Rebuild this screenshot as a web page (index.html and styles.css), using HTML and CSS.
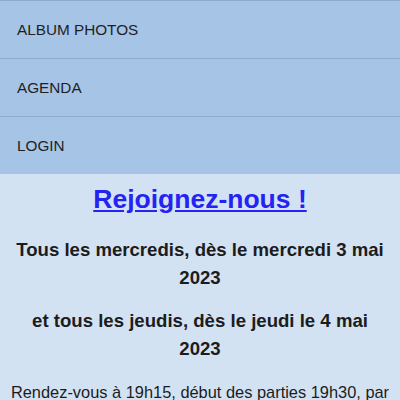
FILE: index.html
```html
<!DOCTYPE html>
<html lang="fr">
<head>
<meta charset="UTF-8">
<meta name="viewport" content="width=device-width, initial-scale=1.0">
<title>Rejoignez-nous</title>
<link rel="stylesheet" href="styles.css">
</head>
<body>

<nav class="menu">
    <a href="#" class="menu-item">ALBUM PHOTOS</a>
    <a href="#" class="menu-item">AGENDA</a>
    <a href="#" class="menu-item">LOGIN</a>
</nav>

<div class="content">
    <h2 class="content-title"><a href="#">Rejoignez-nous !</a></h2>
    <p class="content-strong">Tous les mercredis, dès le mercredi 3 mai 2023</p>
    <p class="content-strong">et tous les jeudis, dès le jeudi le 4 mai 2023</p>
    <p class="content-text">Rendez-vous à 19h15, début des parties 19h30, par équipes de deux joueurs, dans la salle du club.</p>
</div>

</body>
</html>
```

FILE: styles.css
```css
body {
    font-family: "Liberation Sans", Arial, sans-serif;
    margin: 0;
    padding: 0;
    background-color: #d3e2f3;
    color: #1c1c1c;
}
.menu {
    display: flex;
    flex-direction: column;
    background-color: #a6c4e6;
    border-top: 1px solid #8eaad0;
}
.menu-item {
    display: flex;
    align-items: center;
    height: 57px;
    padding: 0 17px;
    border-bottom: 1px solid #8eaad0;
    color: #1f1f1f;
    font-size: 15.3px;
    text-decoration: none;
}
.menu-item:last-child {
    border-bottom: none;
}
.content {
    padding: 10px 10px;
    text-align: center;
}
.content-title {
    margin: 0 0 21px;
    font-size: 26.5px;
}
.content-title a {
    color: #2424f2;
}
.content-strong {
    margin: 0 0 15px;
    padding: 0 4px;
    font-size: 18.6px;
    font-weight: bold;
    line-height: 28px;
}
.content-text {
    margin: 0;
    font-size: 16.4px;
    line-height: 28px;
}
```
